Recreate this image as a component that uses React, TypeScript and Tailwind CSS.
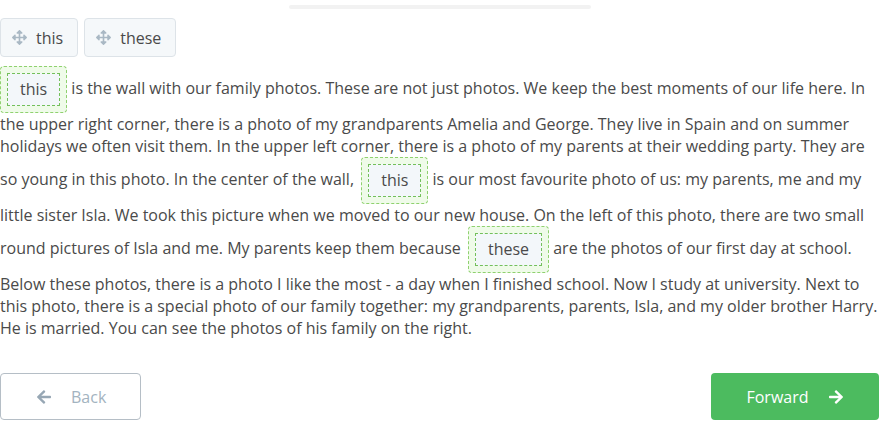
import React from 'react';
import { FaArrowsAlt, FaArrowLeft, FaArrowRight } from 'react-icons/fa';

const font = { fontFamily: '"Open Sans", "Noto Sans", sans-serif' };

function DragChip({ label }: { label: string }) {
  return <div className="inline-flex items-center h-[39px] pl-[11px] pr-[14px] gap-[9px] border border-[#dde3e8] bg-[#f5f8fa] rounded-[4px] text-[16px] text-[#4a4a4a]">
      <FaArrowsAlt className="w-[15px] h-[15px] text-[#a9b8c4]" />
      <span>{label}</span>
    </div>;
}

function Slot({ word, first }: { word: string; first?: boolean }) {
  return <span className={(first ? 'ml-0' : 'ml-[3px]') + ' inline-block align-middle p-[6px] border border-dashed border-[#8fd16f] bg-[#effbe9] rounded-[4px]'}>
      <span className="block h-[33px] leading-[31px] px-[12px] border border-dashed border-[#73c05a] bg-[#f3f7fa] text-[#4a4a4a]">
        {word}
      </span>
    </span>;
}

export default function App() {
  return <div className="w-[889px] h-[435px] bg-white overflow-hidden" style={font}>
      <div className="pt-[5px] flex justify-center">
        <div className="w-[302px] h-[4px] bg-[#f2f2f2] rounded-full ml-[-10px]" />
      </div>
      <div className="flex gap-[6px] mt-[9px]">
        <DragChip label="this" />
        <DragChip label="these" />
      </div>
      <p className="mt-[9px] w-[884px] text-[16px] leading-[22px] text-[#4a4a4a]">
        <Slot word="this" first /> is the wall with our family photos. These are not just photos. We keep the best moments of our life here. In the upper right corner, there is a photo of my grandparents Amelia and George. They live in Spain and on summer holidays we often visit them. In the upper left corner, there is a photo of my parents at their wedding party. They are so young in this photo. In the center of the wall, <Slot word="this" /> is our most favourite photo of us: my parents, me and my little sister Isla. We took this picture when we moved to our new house. On the left of this photo, there are two small round pictures of Isla and me. My parents keep them because <Slot word="these" /> are the photos of our first day at school. Below these photos, there is a photo I like the most - a day when I finished school. Now I study at university. Next to this photo, there is a special photo of our family together: my grandparents, parents, Isla, and my older brother Harry. He is married. You can see the photos of his family on the right.
      </p>
      <div className="flex justify-between items-center mt-[34px] w-[879px]">
        <button className="flex items-center h-[47px] w-[141px] pl-[35px] gap-[19px] border border-[#b5bec6] rounded-[4px] bg-white text-[16px] text-[#a3b3c0]">
          <FaArrowLeft className="w-[16px] h-[16px] text-[#97a7b4]" />
          <span>Back</span>
        </button>
        <button className="flex items-center justify-center h-[47px] w-[168px] gap-[19px] rounded-[4px] bg-[#4cbb5f] text-[16px] text-white">
          <span>Forward</span>
          <FaArrowRight className="w-[16px] h-[16px]" />
        </button>
      </div>
    </div>;
}
